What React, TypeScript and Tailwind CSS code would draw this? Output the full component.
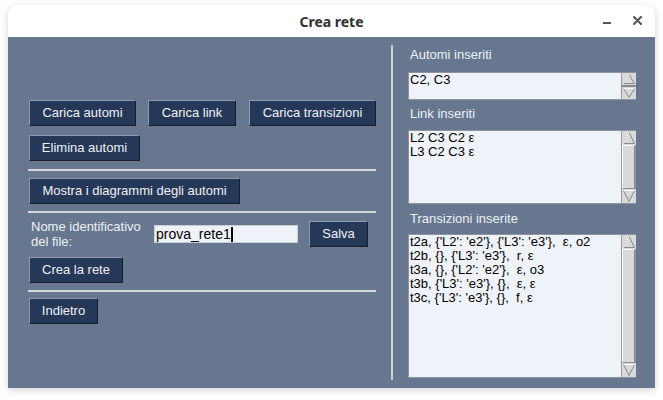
import { FC, ReactNode } from "react";

const font = { fontFamily: '"Liberation Sans", Arial, sans-serif' };

const TkButton: FC<{ children: ReactNode; className?: string }> = ({ children, className = "" }) => (
	<div
		className={`h-[26px] shrink-0 flex items-center justify-center whitespace-nowrap bg-[#263858] text-[#eef1f6] text-[13px] border border-t-[#8e9bb0] border-l-[#8e9bb0] border-b-[#161e2c] border-r-[#161e2c] ${className}`}
	>
		{children}
	</div>
);

const Separator = () => <div className="h-[2px] w-[348px] bg-[#d6d8dc] -ml-px" />;

const Arrow: FC<{ up?: boolean; h: number }> = ({ up, h }) => (
	<svg width="14" height={h} viewBox={`0 0 14 ${h}`} className="block shrink-0">
		<rect x="0" y="0" width="14" height={h} fill="#d9d9d9" />
		{up ? (
			<>
				<polygon points={`7,1.5 12.5,${h - 1.5} 1.5,${h - 1.5}`} fill="#d9d9d9" stroke="#8a8a8a" strokeWidth="1" />
				<polyline points={`1.5,${h - 1.5} 7,1.5`} fill="none" stroke="#ffffff" strokeWidth="1" />
			</>
		) : (
			<>
				<polygon points={`1.5,1.5 12.5,1.5 7,${h - 1.5}`} fill="#d9d9d9" stroke="#8a8a8a" strokeWidth="1" />
				<polyline points={`1.5,1.5 12.5,1.5`} fill="none" stroke="#ffffff" strokeWidth="1" />
			</>
		)}
	</svg>
);

const ScrollBar: FC<{ small?: boolean }> = ({ small }) => (
	<div className="w-[14px] h-full flex flex-col bg-[#c4c4c4] border-l border-[#9a9a9a]">
		<Arrow up h={small ? 12 : 14} />
		{small ? (
			<div className="h-[2px] border-t border-b border-[#8a8a8a] bg-[#d9d9d9]" />
		) : (
			<div className="flex-1 bg-[#d9d9d9] border border-t-[#ffffff] border-l-[#ffffff] border-b-[#8a8a8a] border-r-[#8a8a8a]" />
		)}
		<Arrow h={small ? 12 : 14} />
	</div>
);

const TextBox: FC<{ lines: string[]; height: string; small?: boolean }> = ({ lines, height, small }) => (
	<div className={`w-[228px] ${height} flex border border-[#8f949c] bg-[#eff2f8]`}>
		<div className="flex-1 px-px text-[13px] leading-[14px] text-black whitespace-pre overflow-hidden">
			{lines.map((l, i) => (
				<div key={i}>{l}</div>
			))}
		</div>
		<ScrollBar small={small} />
	</div>
);

export default function App() {
	return (
		<div className="w-[663px] h-[400px] bg-white pt-[5px] pl-[8px]" style={font}>
			<div className="w-[647px] h-[383px] flex flex-col rounded-t-[9px] shadow-[0_2px_8px_rgba(0,0,0,0.18)] overflow-hidden">
				{/* title bar */}
				<div className="h-[32px] shrink-0 bg-white flex items-center relative">
					<p
						className="w-full text-center text-[14px] font-bold text-[#303030]"
						style={{ fontFamily: '"Noto Sans", sans-serif' }}
					>
						Crea rete
					</p>
					<div className="absolute left-[595px] top-[17px] w-[8px] h-[2px] bg-[#555]" />
					<svg className="absolute left-[625px] top-[11px]" width="9" height="9" viewBox="0 0 9 9">
						<path d="M1 1 L8 8 M8 1 L1 8" stroke="#555" strokeWidth="2" strokeLinecap="round" />
					</svg>
				</div>

				{/* content */}
				<div className="flex-1 bg-[#66778f] flex">
					<div className="w-[371px] pl-[21px] pt-[63px] flex flex-col">
						<div className="flex gap-[12px]">
							<TkButton className="w-[107px]">Carica automi</TkButton>
							<TkButton className="w-[88px]">Carica link</TkButton>
							<TkButton className="w-[127px] ml-px">Carica transizioni</TkButton>
						</div>
						<TkButton className="w-[111px] mt-[9px] h-[25px]">Elimina automi</TkButton>
						<div className="mt-[8px]">
							<Separator />
						</div>
						<TkButton className="w-[211px] mt-[7px] h-[25px]">Mostra i diagrammi degli automi</TkButton>
						<div className="mt-[7px]">
							<Separator />
						</div>
						<div className="flex items-start mt-[8px]">
							<div className="w-[125px] -mt-[2px] pl-[2px] text-[13px] leading-[15px] text-[#eef1f6]">
								Nome identificativo
								<br />
								del file:
							</div>
							<div className="mt-[4px] w-[144px] h-[18px] bg-[#eff2f8] border border-[#c9ced6] flex items-center px-px text-[14px] text-black">
								prova_rete1
								<span className="inline-block w-[2px] h-[15px] bg-black" />
							</div>
							<TkButton className="w-[59px] ml-[11px]">Salva</TkButton>
						</div>
						<TkButton className="w-[94px] mt-[8px]">Crea la rete</TkButton>
						<div className="mt-[7px]">
							<Separator />
						</div>
						<TkButton className="w-[69px] mt-[6px] h-[25px]">Indietro</TkButton>
					</div>

					{/* vertical separator */}
					<div className="w-[2px] bg-[#cdd1d6] mt-[8px] mb-[8px] ml-[12px]" />

					<div className="pl-[15px] pt-[10px] flex flex-col">
						<p className="pl-[2px] text-[13px] leading-[15px] text-[#eef1f6]">Automi inseriti</p>
						<div className="mt-[10px]">
							<TextBox lines={["C2, C3"]} height="h-[28px]" small />
						</div>
						<p className="mt-[6px] pl-[2px] text-[13px] leading-[15px] text-[#eef1f6]">Link inseriti</p>
						<div className="mt-[9px]">
							<TextBox lines={["L2 C3 C2 ε", "L3 C2 C3 ε"]} height="h-[74px]" />
						</div>
						<p className="mt-[7px] pl-[2px] text-[13px] leading-[15px] text-[#eef1f6]">Transizioni inserite</p>
						<div className="mt-[8px]">
							<TextBox
								lines={[
									"t2a, {'L2': 'e2'}, {'L3': 'e3'},  ε, o2",
									"t2b, {}, {'L3': 'e3'},  r, ε",
									"t3a, {}, {'L2': 'e2'},  ε, o3",
									"t3b, {'L3': 'e3'}, {},  ε, ε",
									"t3c, {'L3': 'e3'}, {},  f, ε",
								]}
								height="h-[144px]"
							/>
						</div>
					</div>
				</div>
			</div>
		</div>
	);
}
